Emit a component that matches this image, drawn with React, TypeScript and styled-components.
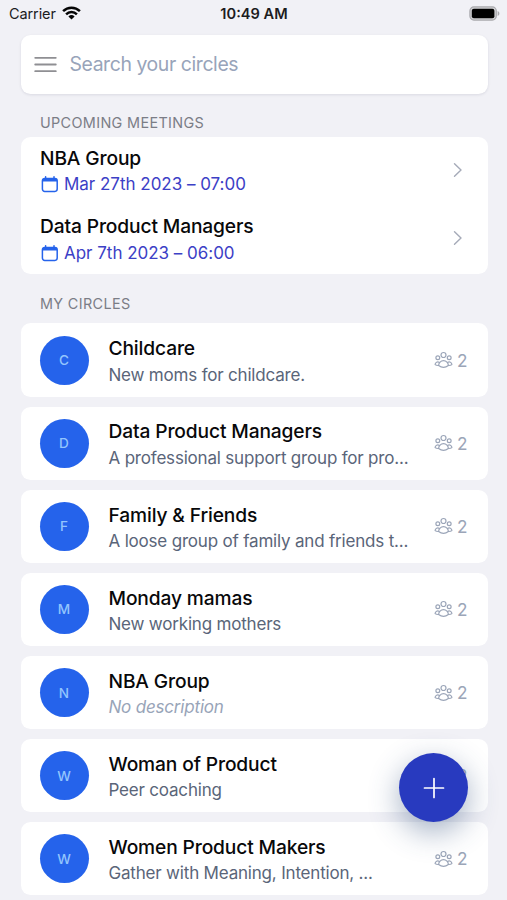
import React from 'react';
import styled, { createGlobalStyle, css } from 'styled-components';

const GlobalStyle = createGlobalStyle`
  * { box-sizing: border-box; }
  body {
    margin: 0;
    background: #f1f1f6;
    font-family: Inter, "Liberation Sans", sans-serif;
    -webkit-font-smoothing: antialiased;
  }
`;

const Screen = styled.div`
  position: relative;
  height: 900px;
  overflow: hidden;
  background: #f1f1f6;
`;

const StatusBar = styled.header`
  display: grid;
  grid-template-columns: 1fr auto 1fr;
  align-items: center;
  height: 35.3px;
  padding: 0 7px 8px 9px;
  font-size: 14.5px;
  color: #1c1c1e;
`;

const Carrier = styled.div`
  display: flex;
  align-items: center;
  gap: 6px;
  letter-spacing: -0.1px;
  svg { margin-top: -2px; }
`;

const Clock = styled.div`
  font-weight: 600;
  font-size: 14.6px;
  letter-spacing: 0;
  padding-right: 1px;
`;

const Battery = styled.div`
  display: flex;
  justify-content: flex-end;
  padding-bottom: 1px;
`;

const cardSurface = css`
  background: #fff;
  border-radius: 9.5px;
`;

const SearchBar = styled.label`
  ${cardSurface}
  display: flex;
  align-items: center;
  gap: 12px;
  height: 58.5px;
  margin: 0 19.5px 0 20.5px;
  padding: 0 12px;
  box-shadow: 0 1px 3px rgba(20, 20, 60, 0.1);
`;

const SearchInput = styled.input`
  flex: 1;
  min-width: 0;
  padding: 0 0 1px;
  border: 0;
  outline: 0;
  background: transparent;
  font: 400 19.4px Inter, sans-serif;
  letter-spacing: -0.4px;
  color: #111;
  &::placeholder { color: #98a4ba; opacity: 1; }
`;

const SectionTitle = styled.h2<{ $height: number; $gap: number }>`
  display: flex;
  align-items: flex-end;
  height: ${(p) => p.$height}px;
  margin: 0;
  padding: 0 0 ${(p) => p.$gap}px 40px;
  font-size: 14.4px;
  line-height: 18px;
  font-weight: 400;
  letter-spacing: 0.35px;
  color: #7b7d86;
  text-transform: uppercase;
`;

const Meetings = styled.section`
  ${cardSurface}
  margin: 0 19.5px 0 20.5px;
`;

const MeetingRow = styled.div`
  display: flex;
  align-items: center;
  justify-content: space-between;
  height: 68.5px;
  padding: 0 24px 0 19.5px;
`;

const MeetingInfo = styled.div`
  padding-bottom: 1px;
`;

const Name = styled.div`
  font-size: 19.2px;
  line-height: 26.5px;
  font-weight: 500;
  letter-spacing: -0.13px;
  color: #08080a;
  white-space: nowrap;
`;

const MeetingTime = styled.div`
  display: flex;
  align-items: center;
  gap: 5px;
  font-size: 17px;
  line-height: 26.5px;
  letter-spacing: -0.02px;
  color: #3c40c6;
`;

const ChevronSlot = styled.div`
  display: flex;
  padding-bottom: 4px;
`;

const CircleList = styled.main`
  display: flex;
  flex-direction: column;
  gap: 9.8px;
  margin: 0 19.5px 0 20.5px;
`;

const CircleCard = styled.article`
  ${cardSurface}
  display: flex;
  align-items: center;
  flex: none;
  height: 73.3px;
  padding: 0 20px 0 19.5px;
`;

const Avatar = styled.div`
  display: grid;
  place-items: center;
  flex: none;
  width: 49px;
  height: 49px;
  padding-right: 1px;
  margin-right: 19.5px;
  border-radius: 50%;
  background: #2563eb;
  color: #93c5fd;
  font-size: 13.6px;
  font-weight: 500;
`;

const CircleText = styled.div`
  flex: none;
  width: 302px;
  padding-top: 3.4px;
`;

const Description = styled.div<{ $empty?: boolean }>`
  font-size: 17px;
  line-height: 26.5px;
  letter-spacing: -0.19px;
  color: ${(p) => (p.$empty ? '#98a4b8' : '#5a6579')};
  font-style: ${(p) => (p.$empty ? 'italic' : 'normal')};
  white-space: nowrap;
`;

const Members = styled.div`
  display: flex;
  align-items: center;
  gap: 4.500px;
  margin-left: auto;
  font-size: 17.2px;
  color: #9ba5b8;
`;

const AddButton = styled.button`
  position: absolute;
  right: 39px;
  bottom: 78px;
  display: grid;
  place-items: center;
  width: 69px;
  height: 69px;
  padding: 0;
  border: 0;
  border-radius: 50%;
  background: #283abf;
  color: #fff;
  box-shadow: 0 10px 30px rgba(50, 80, 125, 0.45);
`;

const meetings = [
  { name: 'NBA Group', time: 'Mar 27th 2023 – 07:00' },
  { name: 'Data Product Managers', time: 'Apr 7th 2023 – 06:00' },
];

const circles = [
  { name: 'Childcare', description: 'New moms for childcare.' },
  { name: 'Data Product Managers', description: 'A professional support group for pro...' },
  { name: 'Family & Friends', description: 'A loose group of family and friends t...' },
  { name: 'Monday mamas', description: 'New working mothers' },
  { name: 'NBA Group', description: '' },
  { name: 'Woman of Product', description: 'Peer coaching' },
  { name: 'Women Product Makers', description: 'Gather with Meaning, Intention, ...' },
];

const WifiIcon = () => (
  <svg width="19" height="14" viewBox="0 0 19 14" fill="none" stroke="#050505" strokeWidth="2.5">
    <path d="M1.1 5.1a12 12 0 0 1 16.8 0" />
    <path d="M4.1 8.3a7.7 7.7 0 0 1 10.8 0" />
    <path d="M9.5 13.6 6.4 10.5a4.5 4.5 0 0 1 6.2 0z" fill="#050505" stroke="none" />
  </svg>
);

const BatteryIcon = () => (
  <svg width="31" height="15" viewBox="0 0 31 15">
    <rect x="0.9" y="0.9" width="26.4" height="13.2" rx="4" fill="#d0d0d3" stroke="#a9a9ad" strokeWidth="1.2" />
    <rect x="2.8" y="2.8" width="22.6" height="9.4" rx="2" fill="#000" />
    <path d="M28.6 5v5c1.2-.5 1.8-1.5 1.8-2.5S29.8 5.5 28.6 5z" fill="#a9a9ad" />
  </svg>
);

const MenuIcon = () => (
  <svg width="25" height="20" viewBox="0 0 25 20" stroke="#8f8f93" strokeWidth="1.8" strokeLinecap="round">
    <path d="M2.2 2.8h20.6M2.2 9.5h20.6M2.2 16.2h20.6" />
  </svg>
);

const CalendarIcon = () => (
  <svg width="19" height="18" viewBox="0 0 19 18" fill="none" stroke="#2563eb" strokeWidth="1.5" strokeLinecap="round">
    <rect x="2.4" y="3.4" width="14.8" height="13" rx="2.3" />
    <path d="M2.6 5.2h14.400" strokeWidth="2.6" strokeLinecap="butt" />
    <path d="M5.600 1.800v2M14 1.800v2" />
  </svg>
);

const Chevron = () => (
  <svg width="12" height="16" viewBox="0 0 12 16" fill="none" stroke="#a5aab8" strokeWidth="1.4" strokeLinecap="round" strokeLinejoin="round">
    <path d="M2.5 1.7 9 8l-6.5 6.3" />
  </svg>
);

const GroupIcon = () => (
  <svg width="19" height="18" viewBox="0 0 19 18" fill="none" stroke="currentColor" strokeWidth="1.2" strokeLinecap="round" strokeLinejoin="round">
    <circle cx="9.5" cy="4" r="2.5" />
    <circle cx="3.800" cy="6.8" r="1.9" />
    <circle cx="15.2" cy="6.8" r="1.9" />
    <path d="M4.600 14.600a4.900 4.900 0 0 1 9.800 0c-2.900 2.100-6.900 2.100-9.800 0z" />
    <path d="M5.400 11.400c-1.900-1.100-4.200-.2-4.300 2.200.9.700 2.100 1 3.500.9M13.600 11.400c1.900-1.100 4.200-.2 4.300 2.200-.9.700-2.100 1-3.500.9" />
  </svg>
);

const PlusIcon = () => (
  <svg width="22" height="22" viewBox="0 0 22 22" stroke="currentColor" strokeWidth="1.7" strokeLinecap="round">
    <path d="M11 1.5v19M1.5 11h19" />
  </svg>
);

export default function App() {
  return (
    <>
      <GlobalStyle />
      <Screen>
        <StatusBar>
          <Carrier>Carrier <WifiIcon /></Carrier>
          <Clock>10:49 AM</Clock>
          <Battery><BatteryIcon /></Battery>
        </StatusBar>
        <SearchBar>
          <MenuIcon />
          <SearchInput placeholder="Search your circles" />
        </SearchBar>
        <SectionTitle $height={43.7} $gap={5}>Upcoming meetings</SectionTitle>
        <Meetings>
          {meetings.map((m) => (
            <MeetingRow key={m.name}>
              <MeetingInfo>
                <Name>{m.name}</Name>
                <MeetingTime><CalendarIcon />{m.time}</MeetingTime>
              </MeetingInfo>
              <ChevronSlot><Chevron /></ChevronSlot>
            </MeetingRow>
          ))}
        </Meetings>
        <SectionTitle $height={49} $gap={10}>My circles</SectionTitle>
        <CircleList>
          {circles.map((c) => (
            <CircleCard key={c.name}>
              <Avatar>{c.name[0]}</Avatar>
              <CircleText>
                <Name>{c.name}</Name>
                <Description $empty={!c.description}>{c.description || 'No description'}</Description>
              </CircleText>
              <Members><GroupIcon />2</Members>
            </CircleCard>
          ))}
        </CircleList>
        <AddButton aria-label="Add circle"><PlusIcon /></AddButton>
      </Screen>
    </>
  );
}
